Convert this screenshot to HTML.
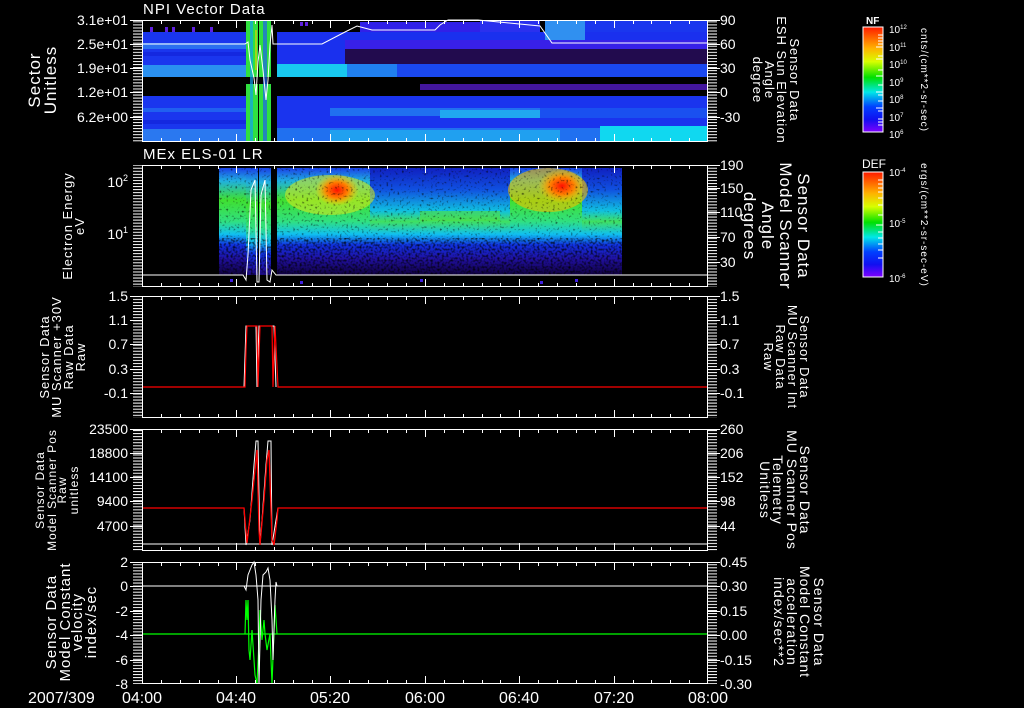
<!DOCTYPE html>
<html><head><meta charset="utf-8"><style>
html,body{margin:0;padding:0;background:#000;}
svg{display:block}
text{font-family:"Liberation Sans",sans-serif;fill:#fff}
</style></head><body>
<svg width="1024" height="708" viewBox="0 0 1024 708" xmlns="http://www.w3.org/2000/svg">
<defs>
<pattern id="vt" x="0" y="0" width="3" height="3.05" patternUnits="userSpaceOnUse"><rect x="0" y="0" width="10" height="1" fill="#fff"/></pattern>
<linearGradient id="cb" x1="0" y1="0" x2="0" y2="1">
<stop offset="0" stop-color="#ff1a00"/><stop offset="0.2" stop-color="#ffb000"/><stop offset="0.33" stop-color="#d8ff00"/><stop offset="0.48" stop-color="#00e000"/><stop offset="0.62" stop-color="#00e8e8"/><stop offset="0.76" stop-color="#0040ff"/><stop offset="0.88" stop-color="#1010f0"/><stop offset="1" stop-color="#8000ff"/></linearGradient>
<linearGradient id="e1" x1="0" y1="0" x2="0" y2="1">
<stop offset="0" stop-color="#1a40e8"/><stop offset="0.12" stop-color="#20b0e0"/><stop offset="0.3" stop-color="#40e030"/><stop offset="0.5" stop-color="#30e080"/><stop offset="0.62" stop-color="#10c0f0"/><stop offset="0.72" stop-color="#1030e0"/><stop offset="0.85" stop-color="#2010a0"/><stop offset="1" stop-color="#100040"/></linearGradient>
<linearGradient id="e2" x1="0" y1="0" x2="0" y2="1">
<stop offset="0" stop-color="#1020c0"/><stop offset="0.2" stop-color="#1050e0"/><stop offset="0.4" stop-color="#10c0e0"/><stop offset="0.5" stop-color="#40e060"/><stop offset="0.62" stop-color="#10c0f0"/><stop offset="0.72" stop-color="#1030e0"/><stop offset="0.85" stop-color="#2010a0"/><stop offset="1" stop-color="#100040"/></linearGradient>
<radialGradient id="hot"><stop offset="0" stop-color="#ff1000"/><stop offset="0.5" stop-color="#ff8000"/><stop offset="1" stop-color="#ffd000" stop-opacity="0"/></radialGradient>
<filter id="nz" x="0" y="0" width="1" height="1"><feTurbulence type="fractalNoise" baseFrequency="0.45" numOctaves="1" seed="3"/><feColorMatrix type="matrix" values="0 0 0 0 0  0 0 0 0 0  0 0 0 0 0  0 0 0 -2.2 1.25"/></filter>
<filter id="nz2" x="0" y="0" width="1" height="1"><feTurbulence type="fractalNoise" baseFrequency="0.45" numOctaves="1" seed="5"/><feColorMatrix type="matrix" values="0 0 0 0 0  0 0 0 0 0  0 0 0 0 0  0 0 0 -2.5 1.05"/></filter>
</defs>

<!-- ============ PANEL 1 ============ -->
<g>
<rect x="142" y="32" width="104" height="45" fill="#1a36ee"/>
<rect x="142" y="43" width="104" height="6" fill="#2a70f0"/>
<rect x="142" y="52" width="104" height="4" fill="#1428e0"/>
<rect x="142" y="65" width="104" height="12" fill="#2a90f0"/>
<rect x="142" y="96" width="104" height="46" fill="#1a36ee"/>
<rect x="142" y="108" width="104" height="4" fill="#2060f0"/>
<rect x="142" y="120" width="104" height="4" fill="#1428e0"/>
<rect x="142" y="129" width="104" height="13" fill="#2a78f0"/>
<rect x="246" y="20" width="12" height="57" fill="#30e040"/>
<rect x="259" y="20" width="12" height="57" fill="#30e040"/>
<rect x="246" y="84" width="12" height="58" fill="#30e040"/>
<rect x="259" y="84" width="12" height="58" fill="#30e040"/>
<rect x="250" y="20" width="3" height="122" fill="#10a0f0" opacity="0.7"/>
<rect x="263" y="20" width="4" height="122" fill="#2060f0" opacity="0.7"/>
<rect x="255" y="30" width="2" height="40" fill="#e8d000" opacity="0.6"/>
<!-- right region -->
<rect x="277" y="32" width="431" height="45" fill="#1a30ee"/>
<rect x="277" y="64" width="431" height="13" fill="#1a48f0"/>
<rect x="277" y="64" width="70" height="13" fill="#18c8f0"/>
<rect x="347" y="64" width="50" height="13" fill="#2080f0"/>
<rect x="360" y="22" width="120" height="10" fill="#3020e8"/>
<rect x="480" y="20" width="60" height="12" fill="#2a30ee"/>
<rect x="545" y="20" width="40" height="22" fill="#3090f0"/>
<rect x="585" y="20" width="123" height="12" fill="#1a36ee"/>
<rect x="345" y="40" width="363" height="9" fill="#3820e8"/>
<rect x="345" y="49" width="363" height="15" fill="#000"/>
<rect x="345" y="49" width="363" height="15" fill="#6020e0" opacity="0.35"/>
<rect x="277" y="96" width="431" height="46" fill="#1a34ee"/>
<rect x="330" y="108" width="210" height="8" fill="#2070f0"/>
<rect x="440" y="110" width="100" height="8" fill="#20a8f0"/>
<rect x="540" y="108" width="168" height="10" fill="#1a50f0"/>
<rect x="277" y="128" width="431" height="14" fill="#2070f0"/>
<rect x="330" y="130" width="230" height="12" fill="#20a0f0"/>
<rect x="600" y="126" width="108" height="16" fill="#10d8f0"/>
<rect x="420" y="84" width="288" height="6" fill="#6020e0" opacity="0.7"/>
<rect x="150" y="27" width="3" height="5" fill="#6020e0"/><rect x="165" y="27" width="3" height="5" fill="#6020e0"/><rect x="172" y="27" width="3" height="5" fill="#6020e0"/><rect x="192" y="27" width="3" height="5" fill="#6020e0"/><rect x="210" y="27" width="3" height="5" fill="#6020e0"/><rect x="300" y="22" width="3" height="4" fill="#6020e0"/><rect x="305" y="22" width="3" height="4" fill="#6020e0"/>
<polyline fill="none" stroke="#fff" stroke-width="1" points="142,44 245,44 248,42 250,60 254,78 256,95 258,62 260,45 263,70 266,100 268,80 270,45 272,25 273,44 322,44 345,32 357,26 372,30 435,30 440,25 448,20 478,20 540,26 552,43 708,43"/>
</g>

<!-- ============ PANEL 2 ============ -->
<g>
<rect x="219" y="168" width="27" height="107" fill="url(#e1)"/>
<rect x="246" y="168" width="12" height="119" fill="url(#e1)"/>
<rect x="259" y="168" width="12" height="119" fill="url(#e1)"/>
<rect x="277" y="168" width="93" height="107" fill="url(#e1)"/>
<rect x="370" y="168" width="140" height="107" fill="url(#e2)"/>
<rect x="510" y="168" width="72" height="107" fill="url(#e1)"/>
<rect x="582" y="168" width="40" height="107" fill="url(#e2)"/>
<ellipse cx="330" cy="195" rx="45" ry="20" fill="#d0e820" opacity="0.6"/>
<ellipse cx="548" cy="190" rx="40" ry="22" fill="#f0c000" opacity="0.6"/>
<ellipse cx="337" cy="190" rx="22" ry="16" fill="url(#hot)"/>
<ellipse cx="562" cy="186" rx="24" ry="17" fill="url(#hot)"/>
<rect x="420" y="211" width="80" height="10" fill="#50e040" opacity="0.6"/>
<rect x="219" y="168" width="403" height="70" filter="url(#nz2)"/>
<rect x="219" y="238" width="403" height="49" filter="url(#nz)"/>
<rect x="142" y="275" width="566" height="12" fill="#000"/>
<polyline fill="none" stroke="#fff" stroke-width="1" points="142,275 243,275 246,280 248,255 251,190 255,180 257,282 259,282 261,195 265,180 267,280 270,282 272,270 276,275 708,275"/>
</g>
<rect x="230" y="279" width="3" height="3" fill="#4020e0"/><rect x="300" y="281" width="3" height="3" fill="#4020e0"/><rect x="420" y="279" width="3" height="3" fill="#4020e0"/><rect x="540" y="281" width="3" height="3" fill="#4020e0"/><rect x="575" y="279" width="3" height="3" fill="#4020e0"/>

<!-- ============ PANEL 3 ============ -->
<polyline fill="none" stroke="#fff" stroke-width="1" points="142,387 244,387 246,326 256,326 257,387 259,326 274,326 276,387"/>
<polyline fill="none" stroke="#f00" stroke-width="1.2" points="142,387 245,387 246,350 247,326 257,326 258,387 260,326 272,326 273,387 275,326 278,387 708,387"/>

<!-- ============ PANEL 4 ============ -->
<line x1="142" y1="544" x2="708" y2="544" stroke="#fff"/>
<polyline fill="none" stroke="#fff" stroke-width="1" points="142,508 244,508 246,545 250,520 254,465 256,441 258,441 260,545 262,520 266,465 268,441 271,441 272,545 276,520 278,508 708,508"/>
<polyline fill="none" stroke="#f00" stroke-width="1.3" points="142,508 244,508 245,520 247,543 252,500 255,470 257,450 259,530 260,545 264,500 267,460 269,450 272,540 274,545 277,520 278,508 708,508"/>

<!-- ============ PANEL 5 ============ -->
<line x1="142" y1="634" x2="708" y2="634" stroke="#0f0" stroke-width="1.2"/>
<polyline fill="none" stroke="#0f0" stroke-width="1.2" points="245,634 246,600 247,620 248,600 249,650 250,660 252,630 255,675 257,684 259,640 260,610 262,640 264,620 265,634 267,650 270,634 272,684 274,630 275,605 277,634"/>
<line x1="142" y1="586" x2="708" y2="586" stroke="#fff"/>
<polyline fill="none" stroke="#fff" stroke-width="1" points="244,586 246,590 248,575 252,565 254,562 256,575 258,600 259,684 261,600 263,575 266,572 268,568 270,580 272,620 273,660 275,600 276,582 277,586"/>

<!-- ============ FRAMES & TICKS ============ -->
<g stroke="#fff" fill="none" stroke-width="1">
<rect x="142.5" y="20.5" width="565" height="121"/>
<rect x="142.5" y="165.5" width="565" height="121"/>
<rect x="142.5" y="296.5" width="565" height="121"/>
<rect x="142.5" y="429.5" width="565" height="121"/>
<rect x="142.5" y="562.5" width="565" height="121"/>
</g>
<g id="tk" stroke="#fff" stroke-width="1">
<path d="M161.5 20v4M180.5 20v4M199.5 20v4M218.5 20v4M236.5 20v8M255.5 20v4M274.5 20v4M293.5 20v4M312.5 20v4M330.5 20v8M349.5 20v4M368.5 20v4M387.5 20v4M406.5 20v4M425.5 20v8M444.5 20v4M463.5 20v4M482.5 20v4M500.5 20v4M519.5 20v8M538.5 20v4M557.5 20v4M576.5 20v4M595.5 20v4M614.5 20v8M633.5 20v4M651.5 20v4M670.5 20v4M689.5 20v4"/>
<path d="M161.5 142v-4M180.5 142v-4M199.5 142v-4M218.5 142v-4M236.5 142v-8M255.5 142v-4M274.5 142v-4M293.5 142v-4M312.5 142v-4M330.5 142v-8M349.5 142v-4M368.5 142v-4M387.5 142v-4M406.5 142v-4M425.5 142v-8M444.5 142v-4M463.5 142v-4M482.5 142v-4M500.5 142v-4M519.5 142v-8M538.5 142v-4M557.5 142v-4M576.5 142v-4M595.5 142v-4M614.5 142v-8M633.5 142v-4M651.5 142v-4M670.5 142v-4M689.5 142v-4"/>
</g>
<use href="#tk" y="145"/>
<use href="#tk" y="276"/>
<use href="#tk" y="409"/>
<use href="#tk" y="542"/>
<g>
<rect x="133" y="20" width="9" height="122" fill="url(#vt)"/><rect x="708" y="20" width="9" height="122" fill="url(#vt)"/>
<rect x="133" y="165" width="9" height="122" fill="url(#vt)"/><rect x="708" y="165" width="9" height="122" fill="url(#vt)"/>
<rect x="133" y="296" width="9" height="122" fill="url(#vt)"/><rect x="708" y="296" width="9" height="122" fill="url(#vt)"/>
<rect x="133" y="429" width="9" height="122" fill="url(#vt)"/><rect x="708" y="429" width="9" height="122" fill="url(#vt)"/>
<rect x="133" y="562" width="9" height="122" fill="url(#vt)"/><rect x="708" y="562" width="9" height="122" fill="url(#vt)"/>
</g>
<g stroke="#fff">
<path d="M130 20.5h12M130 44.5h12M130 68.5h12M130 92.5h12M130 117.5h12M708 20.5h12M708 44.5h12M708 68.5h12M708 92.5h12M708 117.5h12"/>
<path d="M130 296.5h12M130 320.5h12M130 344.5h12M130 369.5h12M130 393.5h12M708 296.5h12M708 320.5h12M708 344.5h12M708 369.5h12M708 393.5h12"/>
<path d="M130 429.5h12M130 453.5h12M130 477.5h12M130 501.5h12M130 526.5h12M708 429.5h12M708 453.5h12M708 477.5h12M708 501.5h12M708 526.5h12"/>
<path d="M130 562.5h12M130 586.5h12M130 611.5h12M130 635.5h12M130 660.5h12M708 562.5h12M708 586.5h12M708 611.5h12M708 635.5h12M708 660.5h12"/>
<path d="M708 165.5h12M708 188.5h12M708 212.5h12M708 237.5h12M708 262.5h12"/>
</g>

<!-- ============ TEXT ============ -->
<g font-size="15" letter-spacing="1">
<text x="143" y="14">NPI Vector Data</text>
<text x="143" y="159">MEx ELS-01 LR</text>
</g>
<g font-size="14" text-anchor="end">
<text x="128" y="25">3.1e+01</text><text x="128" y="49">2.5e+01</text><text x="128" y="73">1.9e+01</text><text x="128" y="97">1.2e+01</text><text x="128" y="122">6.2e+00</text>
<text x="128" y="187">10<tspan font-size="9" dy="-6">2</tspan></text>
<text x="128" y="239">10<tspan font-size="9" dy="-6">1</tspan></text>
<text x="128" y="301">1.5</text><text x="128" y="325">1.1</text><text x="128" y="349">0.7</text><text x="128" y="374">0.3</text><text x="128" y="398">-0.1</text>
<text x="128" y="434">23500</text><text x="128" y="458">18800</text><text x="128" y="482">14100</text><text x="128" y="506">9400</text><text x="128" y="531">4700</text>
<text x="128" y="567">2</text><text x="128" y="591">0</text><text x="128" y="616">-2</text><text x="128" y="640">-4</text><text x="128" y="665">-6</text><text x="128" y="689">-8</text>
</g>
<g font-size="14">
<text x="720" y="25">90</text><text x="720" y="49">60</text><text x="720" y="73">30</text><text x="720" y="97">0</text><text x="720" y="122">-30</text>
<text x="720" y="170">190</text><text x="720" y="193">150</text><text x="720" y="217">110</text><text x="720" y="242">70</text><text x="720" y="267">30</text>
<text x="720" y="301">1.5</text><text x="720" y="325">1.1</text><text x="720" y="349">0.7</text><text x="720" y="374">0.3</text><text x="720" y="398">-0.1</text>
<text x="720" y="434">260</text><text x="720" y="458">206</text><text x="720" y="482">152</text><text x="720" y="506">98</text><text x="720" y="531">44</text>
<text x="720" y="567">0.45</text><text x="720" y="591">0.30</text><text x="720" y="616">0.15</text><text x="720" y="640">0.00</text><text x="720" y="665">-0.15</text><text x="720" y="689">-0.30</text>
</g>
<g font-size="16">
<text x="28" y="703">2007/309</text>
<g text-anchor="middle"><text x="142" y="703">04:00</text><text x="236" y="703">04:40</text><text x="330" y="703">05:20</text><text x="425" y="703">06:00</text><text x="519" y="703">06:40</text><text x="614" y="703">07:20</text><text x="708" y="703">08:00</text></g>
</g>
<g text-anchor="middle" letter-spacing="1">
<g transform="translate(0,80) rotate(-90)" font-size="17"><text x="0" y="40">Sector</text><text x="0" y="56">Unitless</text></g>
<g transform="translate(0,226) rotate(-90)" font-size="13"><text x="0" y="72">Electron Energy</text><text x="0" y="84">eV</text></g>
<g transform="translate(0,357) rotate(-90)" font-size="13"><text x="0" y="49">Sensor Data</text><text x="0" y="61">MU Scanner +30V</text><text x="0" y="73">Raw Data</text><text x="0" y="85">Raw</text></g>
<g transform="translate(0,490) rotate(-90)" font-size="12"><text x="0" y="44">Sensor Data</text><text x="0" y="56">Model Scanner Pos</text><text x="0" y="66">Raw</text><text x="0" y="78">unitless</text></g>
<g transform="translate(0,622) rotate(-90)" font-size="15"><text x="0" y="56">Sensor Data</text><text x="0" y="70">Model Constant</text><text x="0" y="82">velocity</text><text x="0" y="96">index/sec</text></g>
</g>
<g text-anchor="middle" letter-spacing="1">
<g transform="translate(0,80) rotate(90)" font-size="13"><text x="0" y="-790">Sensor Data</text><text x="0" y="-777">ESH Sun Elevation</text><text x="0" y="-765">Angle</text><text x="0" y="-753">degree</text></g>
<g transform="translate(0,226) rotate(90)" font-size="17"><text x="0" y="-798">Sensor Data</text><text x="0" y="-780">Model Scanner</text><text x="0" y="-762">Angle</text><text x="0" y="-744">degrees</text></g>
<g transform="translate(0,357) rotate(90)" font-size="13"><text x="0" y="-800" fill="#f00">Sensor Data</text><text x="0" y="-788" fill="#f00">MU Scanner Int</text><text x="0" y="-776" fill="#f00">Raw Data</text><text x="0" y="-764" fill="#f00">Raw</text></g>
<g transform="translate(0,490) rotate(90)" font-size="14"><text x="0" y="-800" fill="#f00">Sensor Data</text><text x="0" y="-787" fill="#f00">MU Scanner Pos</text><text x="0" y="-773" fill="#f00">Telemetry</text><text x="0" y="-760" fill="#f00">Unitless</text></g>
<g transform="translate(0,622) rotate(90)" font-size="14"><text x="0" y="-814" fill="#0f0">Sensor Data</text><text x="0" y="-800" fill="#0f0">Model Constant</text><text x="0" y="-787" fill="#0f0">acceleration</text><text x="0" y="-774" fill="#0f0">index/sec**2</text></g>
</g>

<!-- ============ COLORBARS ============ -->
<rect x="863" y="27" width="20" height="105" fill="url(#cb)" stroke="#fff" stroke-width="1"/>
<rect x="863" y="172" width="20" height="105" fill="url(#cb)" stroke="#fff" stroke-width="1"/>
<g stroke="#fff"><path d="M878 35h5M878 38h5M878 41h5M878 44h5M876 47h7M878 56h5M876 59h7M878 70h5M876 76h7M878 85h5M876 92h7M878 95h5M878 101h5M876 108h7M878 111h5M878 119h5M878 122h5M878 125h5"/>
<path d="M878 180h5M878 184h5M878 188h5M878 192h5M878 198h5M878 205h5M878 215h5M876 225h7M878 232h5M878 238h5M878 244h5M878 250h5M878 258h5"/></g>
<g font-size="10"><text x="866" y="24" font-weight="bold">NF</text><text x="862" y="168" font-size="12">DEF</text>
<text x="889" y="33">10<tspan font-size="6" dy="-4">12</tspan></text>
<text x="889" y="51">10<tspan font-size="6" dy="-4">11</tspan></text>
<text x="889" y="68">10<tspan font-size="6" dy="-4">10</tspan></text>
<text x="889" y="86">10<tspan font-size="6" dy="-4">9</tspan></text>
<text x="889" y="103">10<tspan font-size="6" dy="-4">8</tspan></text>
<text x="889" y="121">10<tspan font-size="6" dy="-4">7</tspan></text>
<text x="889" y="138">10<tspan font-size="6" dy="-4">6</tspan></text>
<text x="889" y="176">10<tspan font-size="6" dy="-4">-4</tspan></text>
<text x="889" y="227">10<tspan font-size="6" dy="-4">-5</tspan></text>
<text x="889" y="282">10<tspan font-size="6" dy="-4">-6</tspan></text>
</g>
<g font-size="10" text-anchor="middle" letter-spacing="1">
<text transform="translate(921,80) rotate(90)" x="0" y="0">cnts/(cm**2-sr-sec)</text>
<text transform="translate(921,225) rotate(90)" x="0" y="0">ergs/(cm**2-sr-sec-eV)</text>
</g>
</svg>
</body></html>
